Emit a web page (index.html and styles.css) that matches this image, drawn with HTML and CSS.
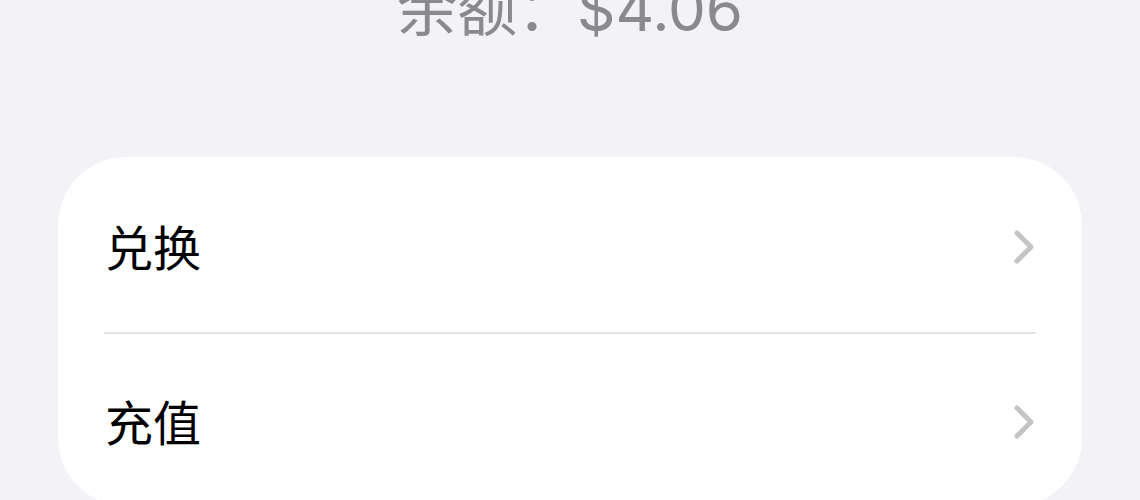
FILE: index.html
```html
<!DOCTYPE html>
<html lang="zh-CN">
<head>
    <meta charset="UTF-8">
    <meta name="viewport" content="width=device-width, initial-scale=1.0">
    <title>余额</title>
    <link rel="stylesheet" href="styles.css">
</head>
<body>
    <div class="balance">余额：$4.06</div>
    <div class="card">
        <div class="row row-first">
            <span class="label">兑换</span>
            <svg class="chevron" viewBox="0 0 22 34" width="22" height="34">
                <polyline points="3,3 17,17 3,31" />
            </svg>
        </div>
        <div class="divider"></div>
        <div class="row row-last">
            <span class="label">充值</span>
            <svg class="chevron" viewBox="0 0 22 34" width="22" height="34">
                <polyline points="3,3 17,17 3,31" />
            </svg>
        </div>
    </div>
</body>
</html>
```

FILE: styles.css
```css
* {
    box-sizing: border-box;
}

body {
    margin: 0;
    background: #f2f2f7;
    font-family: Inter, "Noto Sans CJK SC", sans-serif;
    overflow: hidden;
}

/* 顶部余额，截图里上半部分被裁掉 */
.balance {
    text-align: center;
    font-size: 60px;
    line-height: 60px;
    height: 60px;
    margin-top: -21px;
    color: #8a8a8e;
}

.card {
    margin: 118px 58px 0;
    background: #fff;
    border-radius: 68px;
    overflow: hidden;
}

.row {
    display: flex;
    align-items: center;
    justify-content: space-between;
    padding: 0 46px 0 47px;
}

.row-first {
    height: 175px;
}

.row-last {
    height: 172px;
}

.label {
    font-family: "Noto Sans CJK SC", sans-serif;
    font-size: 48px;
    line-height: 1;
    color: #000;
}

.chevron {
    display: block;
    margin-top: 4px;
}

.chevron polyline {
    fill: none;
    stroke: #c4c4c7;
    stroke-width: 5;
    stroke-linecap: round;
    stroke-linejoin: round;
}

.divider {
    height: 2px;
    margin: 0 46px;
    background: #e4e4e7;
}
```
